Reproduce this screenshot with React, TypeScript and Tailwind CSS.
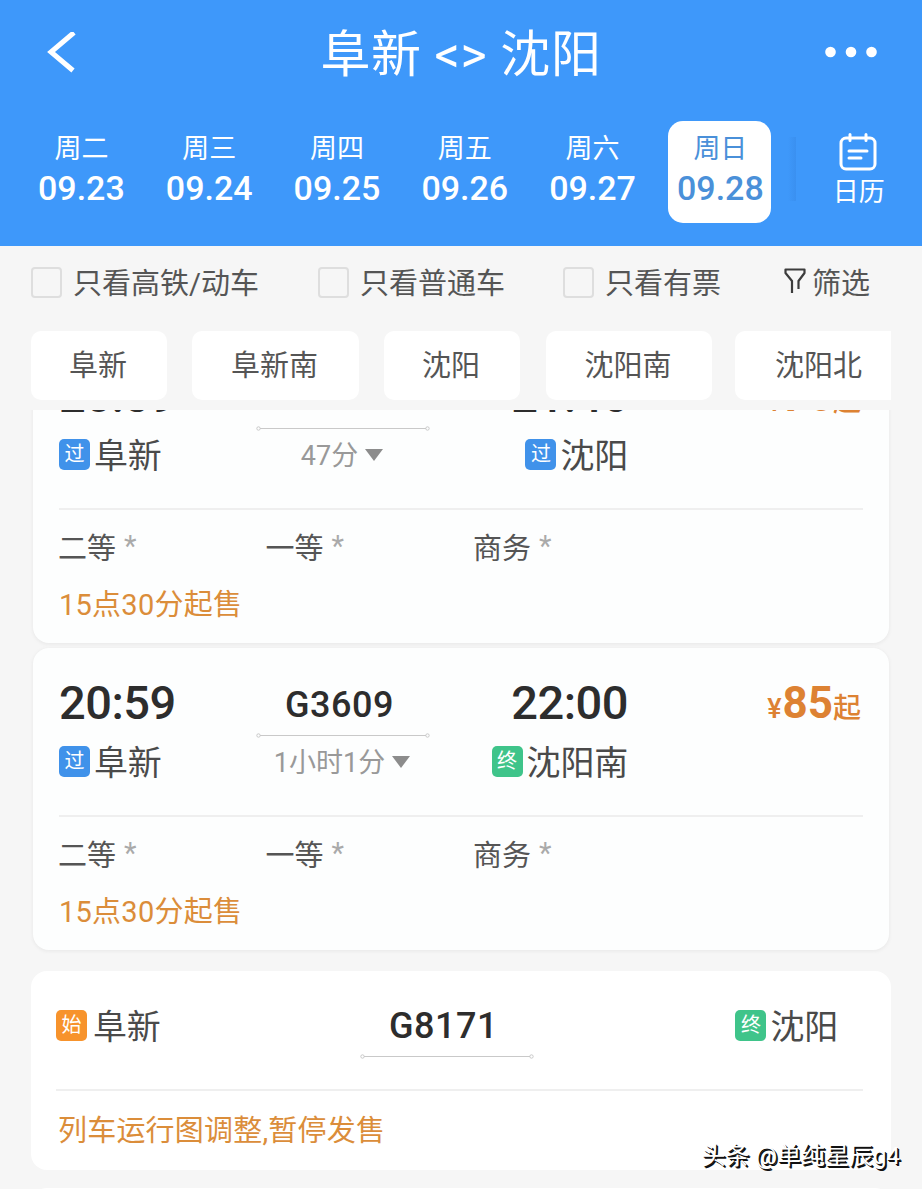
import clsx from "clsx";

const days = [
  { week: "周二", date: "09.23" },
  { week: "周三", date: "09.24" },
  { week: "周四", date: "09.25" },
  { week: "周五", date: "09.26" },
  { week: "周六", date: "09.27" },
  { week: "周日", date: "09.28", active: true },
];

const stations = [
  { name: "阜新", box: "w-[136px] mr-[25px]" },
  { name: "阜新南", box: "w-[167px] mr-[25px]" },
  { name: "沈阳", box: "w-[136px] mr-[26px]" },
  { name: "沈阳南", box: "w-[166px] mr-[23px]" },
  { name: "沈阳北", box: "w-[169px]" },
];

const badgeColors = {
  过: "bg-[#4092ea]",
  终: "bg-[#3fc48a]",
  始: "bg-[#f7932c]",
};

function Station({ badge, name }: { badge: keyof typeof badgeColors; name: string }) {
  return (
    <div className="flex items-start h-[36px] whitespace-nowrap">
      <span className={clsx(badgeColors[badge], badge === "始" ? "mr-[6px]" : "mr-[4px]", "w-[31px] h-[31px] mt-[2px] rounded-[5px] text-white text-[20px] leading-[31px] text-center")}>
        {badge}
      </span>
      <span className="text-[34px] leading-[39px] tracking-[-0.2px] text-[#4a4a4a]">{name}</span>
    </div>
  );
}

function RouteLine() {
  return (
    <svg className="block" width="174" height="6" viewBox="0 0 174 6" fill="none" stroke="#c9c9c9">
      <path d="M4 3.500h166" strokeWidth="1" />
      <circle cx="2.5" cy="3.5" r="1.7" />
      <circle cx="171.5" cy="3.5" r="1.7" />
    </svg>
  );
}

function Checkbox({ label }: { label: string }) {
  return (
    <label className="flex items-center">
      <span className="w-[31px] h-[31px] rounded-[4px] border-2 border-[#dedede] mr-[11px] -mt-px" />
      <span className="pt-[4px]">{label}</span>
    </label>
  );
}

function TrainCard({ depart, arrive, no, duration, price, to, toBadge }) {
  return (
    <div className="mx-[33px] h-[302px] shrink-0 rounded-[16px] bg-[#fdfefe] shadow-[0_1px_3px_1px_#ececec] pl-[26px] pr-[26px] pt-[30px]">
      <div className="flex h-[139px] border-b-2 border-[#efefef]">
        <div className="w-[197px]">
          <div className="text-[47px] leading-[50px] font-medium tracking-[-0.5px] text-[#2d2d2d]">{depart}</div>
          <div className="mt-[16px]">
            <Station badge="过" name="阜新" />
          </div>
        </div>
        <div className="w-[174px] flex flex-col items-center">
          <div className="text-[36px] leading-[54px] font-medium tracking-[0.5px] text-[#2d2d2d] -ml-[7px]">{no}</div>
          <RouteLine />
          <div className="flex items-center mt-[7px] text-[27px] leading-[36px] text-[#999]">
            {duration}
            <svg className="ml-[7px] mr-[2px] -mt-[3px]" width="18" height="12" viewBox="0 0 18 12">
              <path d="M0 0h18L9 12z" fill="#8c8c8c" />
            </svg>
          </div>
        </div>
        <div className="w-[198px] flex flex-col items-end">
          <div className="text-[47px] leading-[50px] font-medium tracking-[-0.5px] text-[#2d2d2d]">{arrive}</div>
          <div className="mt-[16px]">
            <Station badge={toBadge} name={to} />
          </div>
        </div>
        <div className="flex-1 flex items-baseline justify-end h-[52px] leading-[50px] pr-[2px] text-[#dd8233]">
          <span className="text-[27px] font-medium mr-px">¥</span>
          <span className="text-[44px] font-bold">{price}</span>
          <span className="text-[28px] font-medium">起</span>
        </div>
      </div>
      <div className="flex mt-[20px] text-[29px] leading-[38px] text-[#555]">
        {["二等", "一等", "商务"].map((seat) => (
          <div key={seat} className="w-[207.5px] flex">
            <span className="-ml-px">{seat}</span>
            <span className="ml-[8px] -mt-[3px] text-[#aaa]">*</span>
          </div>
        ))}
      </div>
      <div className="mt-[18px] text-[29px] leading-[38px] tracking-[0.25px] text-[#db8d3a]">15点30分起售</div>
    </div>
  );
}

export default function App() {
  return (
    <div className="relative w-[922px] h-[1189px] overflow-hidden flex flex-col bg-[#f6f6f6] font-[Roboto,'Noto_Sans_CJK_SC',sans-serif]">
      <header className="h-[246px] shrink-0 bg-[#3e98fa] text-white">
        <div className="h-[106px] flex items-center justify-between pl-[47px] pr-[45px]">
          <svg className="w-[50px]" width="50" height="42" viewBox="0 0 50 42" fill="none">
            <path d="M27 0.500L4 20L26 38.500" stroke="#fff" strokeWidth="5" />
          </svg>
          <h1 className="pt-[4px] text-[50px] leading-none tracking-[0.6px]">阜新 &lt;&gt; 沈阳</h1>
          <svg className="-mt-[2px]" width="52" height="12" viewBox="0 0 52 12" fill="#fff">
            <circle cx="5.500" cy="6" r="5.300" />
            <circle cx="26" cy="6" r="5.300" />
            <circle cx="46.500" cy="6" r="5.300" />
          </svg>
        </div>
        <div className="flex pl-[17px] pt-[15px]">
          {days.map((d) => (
            <div key={d.date} className="w-[127.8px] flex justify-center">
              <div className={clsx("w-[103px] h-[102px] pt-[10px] rounded-[15px] text-center", d.active && "bg-white text-[#4a90d9]")}>
                <div className="text-[27px] leading-[36px] pl-px">{d.week}</div>
                <div className="text-[34px] leading-[42px] font-medium pl-px">{d.date}</div>
              </div>
            </div>
          ))}
          <div className="ml-[4px] w-[8px] h-[64px] mt-[16px] bg-linear-to-r from-[#3e98fa] to-[#3a90f0]" />
          <div className="ml-[35px] w-[54px] flex flex-col items-center pt-[12px]">
            <svg width="38" height="38" viewBox="0 0 38 38" fill="none" stroke="#fff" strokeWidth="3" strokeLinecap="round">
              <rect x="2" y="5" width="34" height="31" rx="5" />
              <path d="M11 1.500v6M27 1.500v6M10 18h18M10 25h12" />
            </svg>
            <span className="text-[26px] leading-[36px] mt-[3px] pl-[2px]">日历</span>
          </div>
        </div>
      </header>

      <div className="h-[74px] shrink-0 flex items-center pl-[31px] text-[29px] text-[#555]">
        <div className="w-[287px]">
          <Checkbox label="只看高铁/动车" />
        </div>
        <div className="w-[245px]">
          <Checkbox label="只看普通车" />
        </div>
        <div className="w-[221px]">
          <Checkbox label="只看有票" />
        </div>
        <svg className="mr-[6px] -mt-[4px]" width="22" height="26" viewBox="0 0 22 26" fill="none" stroke="#3c3c3c" strokeWidth="2.200">
          <path d="M8 25V13L1.500 5V1.500H20.500V5L14.500 13V21" strokeLinejoin="round" />
        </svg>
        <span className="pt-[4px]">筛选</span>
      </div>

      <div className="h-[90px] shrink-0 pt-[11px] mx-[31px] flex overflow-hidden">
        {stations.map((s) => (
          <div key={s.name} className={clsx(s.box, "shrink-0 h-[69px] pr-[2px] rounded-[10px] bg-white text-center text-[29px] leading-[70px] text-[#555]")}>
            {s.name}
          </div>
        ))}
      </div>

      <main className="flex-1 overflow-hidden flex flex-col">
        <div className="-mt-[69px] mb-[5px] shrink-0">
          <TrainCard depart="20:59" arrive="21:46" no="G3601" duration="47分" price="76" to="沈阳" toBadge="过" />
        </div>
        <TrainCard depart="20:59" arrive="22:00" no="G3609" duration="1小时1分" price="85" to="沈阳南" toBadge="终" />
        <div className="mx-[31px] mt-[21px] h-[199px] shrink-0 rounded-[16px] bg-white pl-[25px] pr-[28px] pt-[28px]">
          <div className="flex h-[92px] border-b-2 border-[#efefef]">
            <div className="w-[304px] pt-[9px]">
              <Station badge="始" name="阜新" />
            </div>
            <div className="w-[174px] flex flex-col items-center">
              <div className="text-[36px] leading-[54px] font-medium tracking-[0.5px] text-[#2d2d2d] -ml-[7px]">G8171</div>
              <RouteLine />
            </div>
            <div className="flex-1 flex justify-end pt-[9px] pr-[25px]">
              <Station badge="终" name="沈阳" />
            </div>
          </div>
          <div className="mt-[21px] ml-[2px] text-[29px] leading-[38px] tracking-[0.2px] text-[#db8d3a]">列车运行图调整,暂停发售</div>
        </div>
        <div className="mx-[31px] mt-[18px] h-[199px] shrink-0 rounded-[16px] bg-white" />
      </main>

      <div className="absolute right-[22px] bottom-[17px] text-[24px] leading-[32px] text-white [text-shadow:1px_1px_0_#111,2px_2px_0_#111]">头条 @单纯星辰g4</div>
    </div>
  );
}
